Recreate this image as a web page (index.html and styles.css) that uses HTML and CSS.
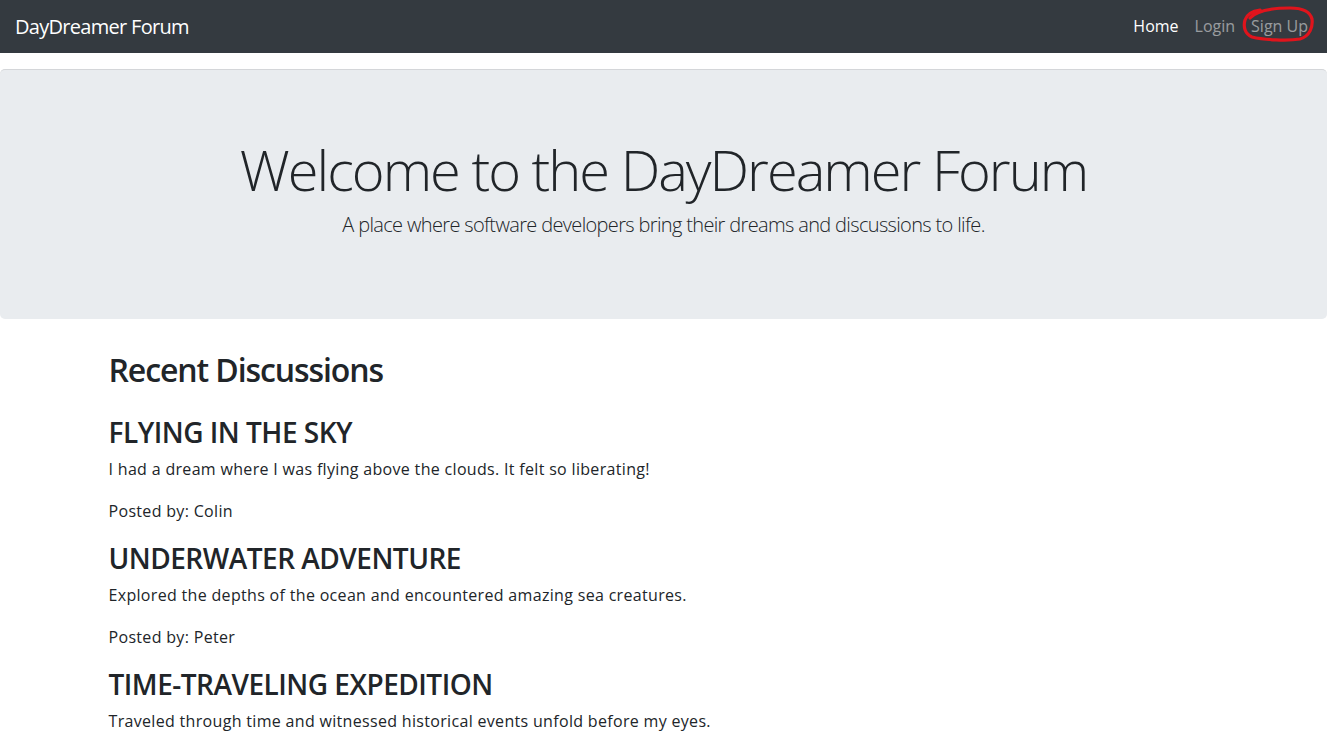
FILE: index.html
```html
<!DOCTYPE html>
<html lang="en">
<head>
<meta charset="utf-8">
<title>DayDreamer Forum</title>
<link rel="stylesheet" href="styles.css">
</head>
<body>
<nav class="navbar">
  <a class="brand" href="#">DayDreamer Forum</a>
  <ul class="nav">
    <li><a class="nav-link active" href="#">Home</a></li>
    <li><a class="nav-link" href="#">Login</a></li>
    <li class="annotated">
      <a class="nav-link" href="#">Sign Up</a>
      <svg class="scribble" width="74" height="40" viewBox="0 0 74 40" aria-hidden="true">
        <path d="M8 13 C14 6 30 3 48 3 C60 3 68 6 70 14 C71 22 68 31 58 34 C46 36 22 35 10 32 C3 29 1 22 3 15 C5 9 10 6 18 5" fill="none" stroke="#e0141c" stroke-width="3.2" stroke-linecap="round" stroke-linejoin="round"/>
      </svg>
    </li>
  </ul>
</nav>

<header class="jumbotron">
  <h1 class="display">Welcome to the DayDreamer Forum</h1>
  <p class="lead">A place where software developers bring their dreams and discussions to life.</p>
</header>

<main class="container">
  <h2 class="section-title">Recent Discussions</h2>

  <article class="post">
    <h3 class="post-title">Flying in the Sky</h3>
    <p class="post-body">I had a dream where I was flying above the clouds. It felt so liberating!</p>
    <p class="post-author">Posted by: Colin</p>
  </article>

  <article class="post">
    <h3 class="post-title">Underwater Adventure</h3>
    <p class="post-body">Explored the depths of the ocean and encountered amazing sea creatures.</p>
    <p class="post-author">Posted by: Peter</p>
  </article>

  <article class="post">
    <h3 class="post-title">Time-Traveling Expedition</h3>
    <p class="post-body">Traveled through time and witnessed historical events unfold before my eyes.</p>
  </article>
</main>
</body>
</html>
```

FILE: styles.css
```css
* { box-sizing: border-box; }

html, body {
  margin: 0;
  padding: 0;
}

body {
  font-family: "Open Sans", "Noto Sans", sans-serif;
  font-size: 16px;
  line-height: 1.5;
  color: #212529;
  background: #fff;
}

a { text-decoration: none; }

.navbar {
  display: flex;
  align-items: center;
  justify-content: space-between;
  background: #343a40;
  padding: 8px 11px 8px 15px;
  height: 53px;
}

.brand {
  color: #fff;
  font-size: 20px;
  line-height: 27px;
  padding: 5px 0;
  letter-spacing: -0.7px;
}

.nav {
  display: flex;
  list-style: none;
  margin: 0;
  padding: 0;
}

.nav-link {
  display: block;
  padding: 8px 8px;
  color: rgba(255, 255, 255, 0.5);
  line-height: 21px;
}

.nav-link.active { color: #fff; }

.annotated { position: relative; }

.scribble {
  position: absolute;
  left: -1px;
  top: -3px;
  pointer-events: none;
}

.jumbotron {
  margin: 16px 0 32px;
  padding: 66px 32px 63px;
  background: #e9ecef;
  border-top: 1px solid #d4d6d9;
  border-radius: 5px;
  text-align: center;
}

.display {
  margin: 0 0 7px;
  font-size: 56px;
  font-weight: 300;
  line-height: 1.2;
  letter-spacing: -2px;
}

.lead {
  margin: 0 0 16px;
  font-size: 20px;
  font-weight: 300;
  line-height: 1.5;
  letter-spacing: -0.65px;
}

.container {
  max-width: 1140px;
  margin: 0 auto;
  padding: 0 15px;
}

.section-title {
  margin: 0 0 26px;
  font-size: 32px;
  font-weight: 600;
  line-height: 1.2;
  letter-spacing: -1.1px;
}

.post { padding-bottom: 2.5px; }

.post-title {
  margin: 0 0 8px;
  font-size: 28px;
  font-weight: 600;
  line-height: 1.2;
  text-transform: uppercase;
  letter-spacing: -0.5px;
}

.post-body,
.post-author {
  letter-spacing: 0.32px;
}

.post-body {
  margin: 0 0 18px;
}

.post-author {
  margin: 0 0 16px;
}
```
